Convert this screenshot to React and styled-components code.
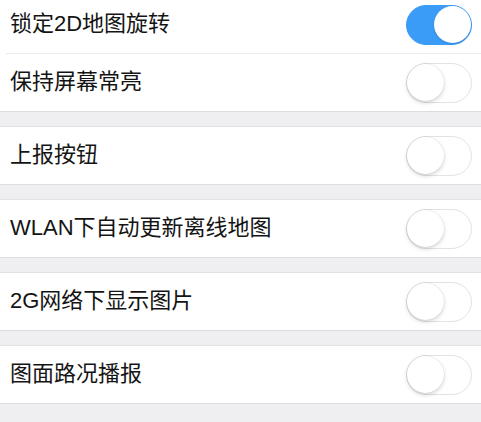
import React from 'react';
import styled, { createGlobalStyle } from 'styled-components';

const GlobalStyle = createGlobalStyle`
	html, body {
		margin: 0;
		padding: 0;
		background: #efeff1;
	}
	body {
		font-family: "Liberation Sans", "Noto Sans CJK SC", sans-serif;
	}
`;

const groups = [
	[
		{ label: '锁定2D地图旋转', on: true },
		{ label: '保持屏幕常亮', on: false },
	],
	[{ label: '上报按钮', on: false }],
	[{ label: 'WLAN下自动更新离线地图', on: false }],
	[{ label: '2G网络下显示图片', on: false }],
	[{ label: '图面路况播报', on: false }],
];

const App = () => {
	return (
		<>
			<GlobalStyle />
			<Page>
				{groups.map((rows, i) => (
					<Group key={i} $first={i === 0}>
						{rows.map((row, j) => (
							<Row key={row.label} $divider={j > 0}>
								<Label>{row.label}</Label>
								<Switch $on={row.on}>
									<Knob $on={row.on} />
								</Switch>
							</Row>
						))}
					</Group>
				))}
			</Page>
		</>
	);
};

const Page = styled.div`
	display: flex;
	flex-direction: column;
	gap: 14px;
	margin-top: -4px;
	padding-bottom: 21px;
	background: #efeff1;
`;

const Group = styled.div`
	background: #fff;
	border-top: ${(p) => (p.$first ? 'none' : '1px solid #e2e2e4')};
	border-bottom: 1px solid #dddde0;
`;

const Row = styled.div`
	display: flex;
	align-items: center;
	justify-content: space-between;
	height: 57px;
	padding: 0 9px 0 10px;
	border-top: ${(p) => (p.$divider ? '1px solid #ececee' : 'none')};
	margin-left: ${(p) => (p.$divider ? '6px' : '0')};
	padding-left: ${(p) => (p.$divider ? '4px' : '10px')};
`;

const Label = styled.span`
	font-size: 22px;
	line-height: 1;
	color: #141414;
	margin-top: -2px;
`;

const Switch = styled.div`
	position: relative;
	box-sizing: border-box;
	width: 66px;
	height: 40px;
	border-radius: 20px;
	background: ${(p) => (p.$on ? '#3a9cf6' : '#fff')};
	border: ${(p) => (p.$on ? '1px solid #3a9cf6' : '1.5px solid #e3e3e5')};
`;

const Knob = styled.div`
	position: absolute;
	top: 0;
	left: ${(p) => (p.$on ? '27px' : '0')};
	width: 37px;
	height: 37px;
	border-radius: 50%;
	background: #fff;
	box-shadow: ${(p) =>
		p.$on
			? '0 1px 2px rgba(0,0,0,0.15)'
			: '0 2px 4px rgba(0,0,0,0.16), 0 0 0 0.5px rgba(0,0,0,0.08)'};
`;

export default App;
